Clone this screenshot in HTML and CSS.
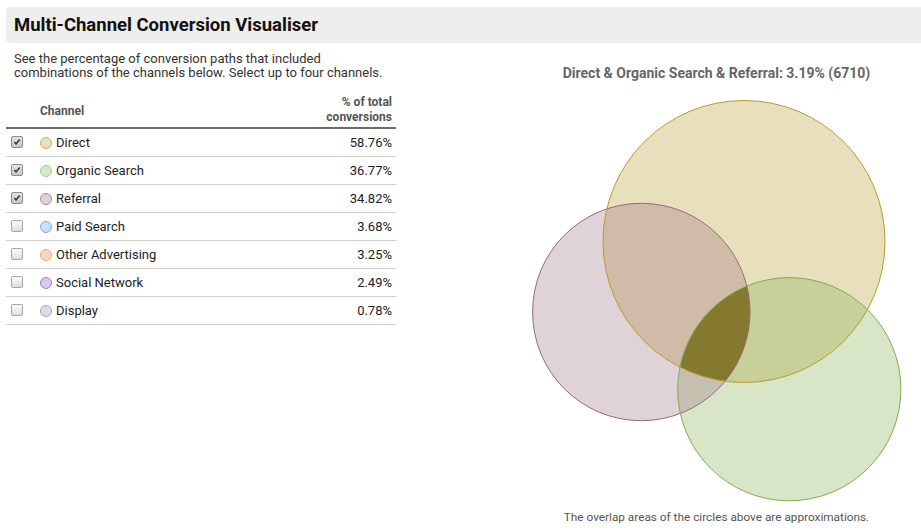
FILE: index.html
```html
<!DOCTYPE html>
<html>
<head>
<meta charset="utf-8">
<link rel="stylesheet" href="styles.css">
</head>
<body>
<div class="page">
  <header class="titlebar"><h1>Multi-Channel Conversion Visualiser</h1></header>
  <div class="main">
    <section class="left">
      <p class="intro">See the percentage of conversion paths that included<br>combinations of the channels below. Select up to four channels.</p>
      <div class="table">
        <div class="thead">
          <span class="th-channel">Channel</span>
          <span class="th-pct">% of total<br>conversions</span>
        </div>
        <div class="row"><span class="cb checked"><svg viewBox="0 0 13 13"><path d="M3 6.5 L5.3 9 L10 3.2" /></svg></span><span class="dot dot-direct"></span><span class="name">Direct</span><span class="pct">58.76%</span></div>
        <div class="row"><span class="cb checked"><svg viewBox="0 0 13 13"><path d="M3 6.5 L5.3 9 L10 3.2" /></svg></span><span class="dot dot-organic"></span><span class="name">Organic Search</span><span class="pct">36.77%</span></div>
        <div class="row"><span class="cb checked"><svg viewBox="0 0 13 13"><path d="M3 6.5 L5.3 9 L10 3.2" /></svg></span><span class="dot dot-referral"></span><span class="name">Referral</span><span class="pct">34.82%</span></div>
        <div class="row"><span class="cb"></span><span class="dot dot-paid"></span><span class="name">Paid Search</span><span class="pct">3.68%</span></div>
        <div class="row"><span class="cb"></span><span class="dot dot-other"></span><span class="name">Other Advertising</span><span class="pct">3.25%</span></div>
        <div class="row"><span class="cb"></span><span class="dot dot-social"></span><span class="name">Social Network</span><span class="pct">2.49%</span></div>
        <div class="row"><span class="cb"></span><span class="dot dot-display"></span><span class="name">Display</span><span class="pct">0.78%</span></div>
      </div>
    </section>
    <section class="right">
      <h2 class="chart-title">Direct &amp; Organic Search &amp; Referral: 3.19% (6710)</h2>
      <svg class="venn" width="409" height="415" viewBox="0 0 409 415">
        <defs>
          <clipPath id="cD"><circle cx="232" cy="151.5" r="141"/></clipPath>
          <clipPath id="cR"><circle cx="129.3" cy="222" r="108.7"/></clipPath>
          <clipPath id="cO"><circle cx="277.3" cy="299.2" r="111.6"/></clipPath>
        </defs>
        <circle cx="129.3" cy="222" r="108.7" fill="#e0d3d8"/>
        <circle cx="277.3" cy="299.2" r="111.6" fill="#d8e5c7"/>
        <circle cx="232" cy="151.5" r="141" fill="#e8e0bd"/>
        <g clip-path="url(#cD)">
          <circle cx="129.3" cy="222" r="108.7" fill="#d0bba9"/>
          <circle cx="277.3" cy="299.2" r="111.6" fill="#c7d098"/>
        </g>
        <g clip-path="url(#cR)">
          <circle cx="277.3" cy="299.2" r="111.6" fill="#c6c0b1"/>
        </g>
        <g clip-path="url(#cR)">
          <g clip-path="url(#cD)">
            <circle cx="277.3" cy="299.2" r="111.6" fill="#85782f"/>
          </g>
        </g>
        <circle cx="129.3" cy="222" r="108.7" fill="none" stroke="#946a7e" stroke-width="1"/>
        <circle cx="277.3" cy="299.2" r="111.6" fill="none" stroke="#80ad4f" stroke-width="1"/>
        <circle cx="232" cy="151.5" r="141" fill="none" stroke="#b99a30" stroke-width="1"/>
      </svg>
      <p class="note">The overlap areas of the circles above are approximations.</p>
    </section>
  </div>
</div>
</body>
</html>
```
FILE: styles.css
```css
* { box-sizing: border-box; }
html, body { margin: 0; padding: 0; background: #fff; }
body {
  font-family: Roboto, "Liberation Sans", Arial, sans-serif;
  color: #222;
  overflow: hidden;
}
.page {
  padding: 7px 0 0 6px;
  width: 921px;
  height: 530px;
}
.titlebar {
  background: #eeeeee;
  height: 36px;
  border-radius: 4px 0 0 4px;
  display: flex;
  align-items: center;
  padding-left: 8px;
}
.titlebar h1 {
  margin: 0;
  font-size: 18.5px;
  font-weight: 700;
  color: #111;
}
.main {
  display: grid;
  grid-template-columns: 390px 1fr;
}
.left { padding-top: 9px; }
.intro {
  margin: 0 0 0 8px;
  font-size: 13px;
  line-height: 14px;
  color: #333;
}
.table { margin-top: 13px; width: 390px; }
.thead {
  display: flex;
  justify-content: space-between;
  align-items: center;
  height: 36px;
  border-bottom: 2px solid #6b6b6b;
  padding: 0 4px 0 34px;
  font-size: 12px;
  font-weight: 700;
  color: #555;
}
.th-channel { padding-top: 2px; }
.th-pct { text-align: right; line-height: 15px; }
.row {
  display: flex;
  align-items: center;
  height: 28px;
  border-bottom: 1px solid #cfcfcf;
  padding: 0 4px 0 5px;
  font-size: 13px;
  color: #222;
}
.cb {
  width: 12px;
  height: 12px;
  border: 1px solid #a6a6a6;
  border-radius: 2px;
  background: linear-gradient(#fbfbfb, #dedede);
  margin-right: 17px;
  margin-top: -2px;
  display: flex;
}
.cb.checked {
  border-color: #8a8a8a;
  background: linear-gradient(#e4e4e4, #c8c8c8);
}
.cb svg { width: 10px; height: 10px; margin: 0; }
.cb svg path { fill: none; stroke: #333; stroke-width: 2; }
.dot {
  width: 12px;
  height: 12px;
  border-radius: 50%;
  border: 1px solid;
  margin-right: 4px;
}
.dot-direct { background: #ebe0b6; border-color: #c9b468; }
.dot-organic { background: #d7e8c9; border-color: #a4c98a; }
.dot-referral { background: #e3d2d9; border-color: #a88a98; }
.dot-paid { background: #cadffc; border-color: #80a8ea; }
.dot-other { background: #fcd9be; border-color: #eea474; }
.dot-social { background: #dacaee; border-color: #9c80c8; }
.dot-display { background: #d9dde5; border-color: #9ea4b2; }
.name { flex: 1; }
.pct { text-align: right; }
.right {
  padding-left: 116px;
  display: flex;
  flex-direction: column;
  align-items: center;
}
.chart-title {
  margin: 22px 0 0 0;
  font-size: 14px;
  font-weight: 700;
  color: #666;
  line-height: 16px;
}
.venn { display: block; margin-top: 9px; }
.note {
  margin: 5px 0 0 0;
  font-size: 11.8px;
  color: #555;
  line-height: 14px;
}
```
